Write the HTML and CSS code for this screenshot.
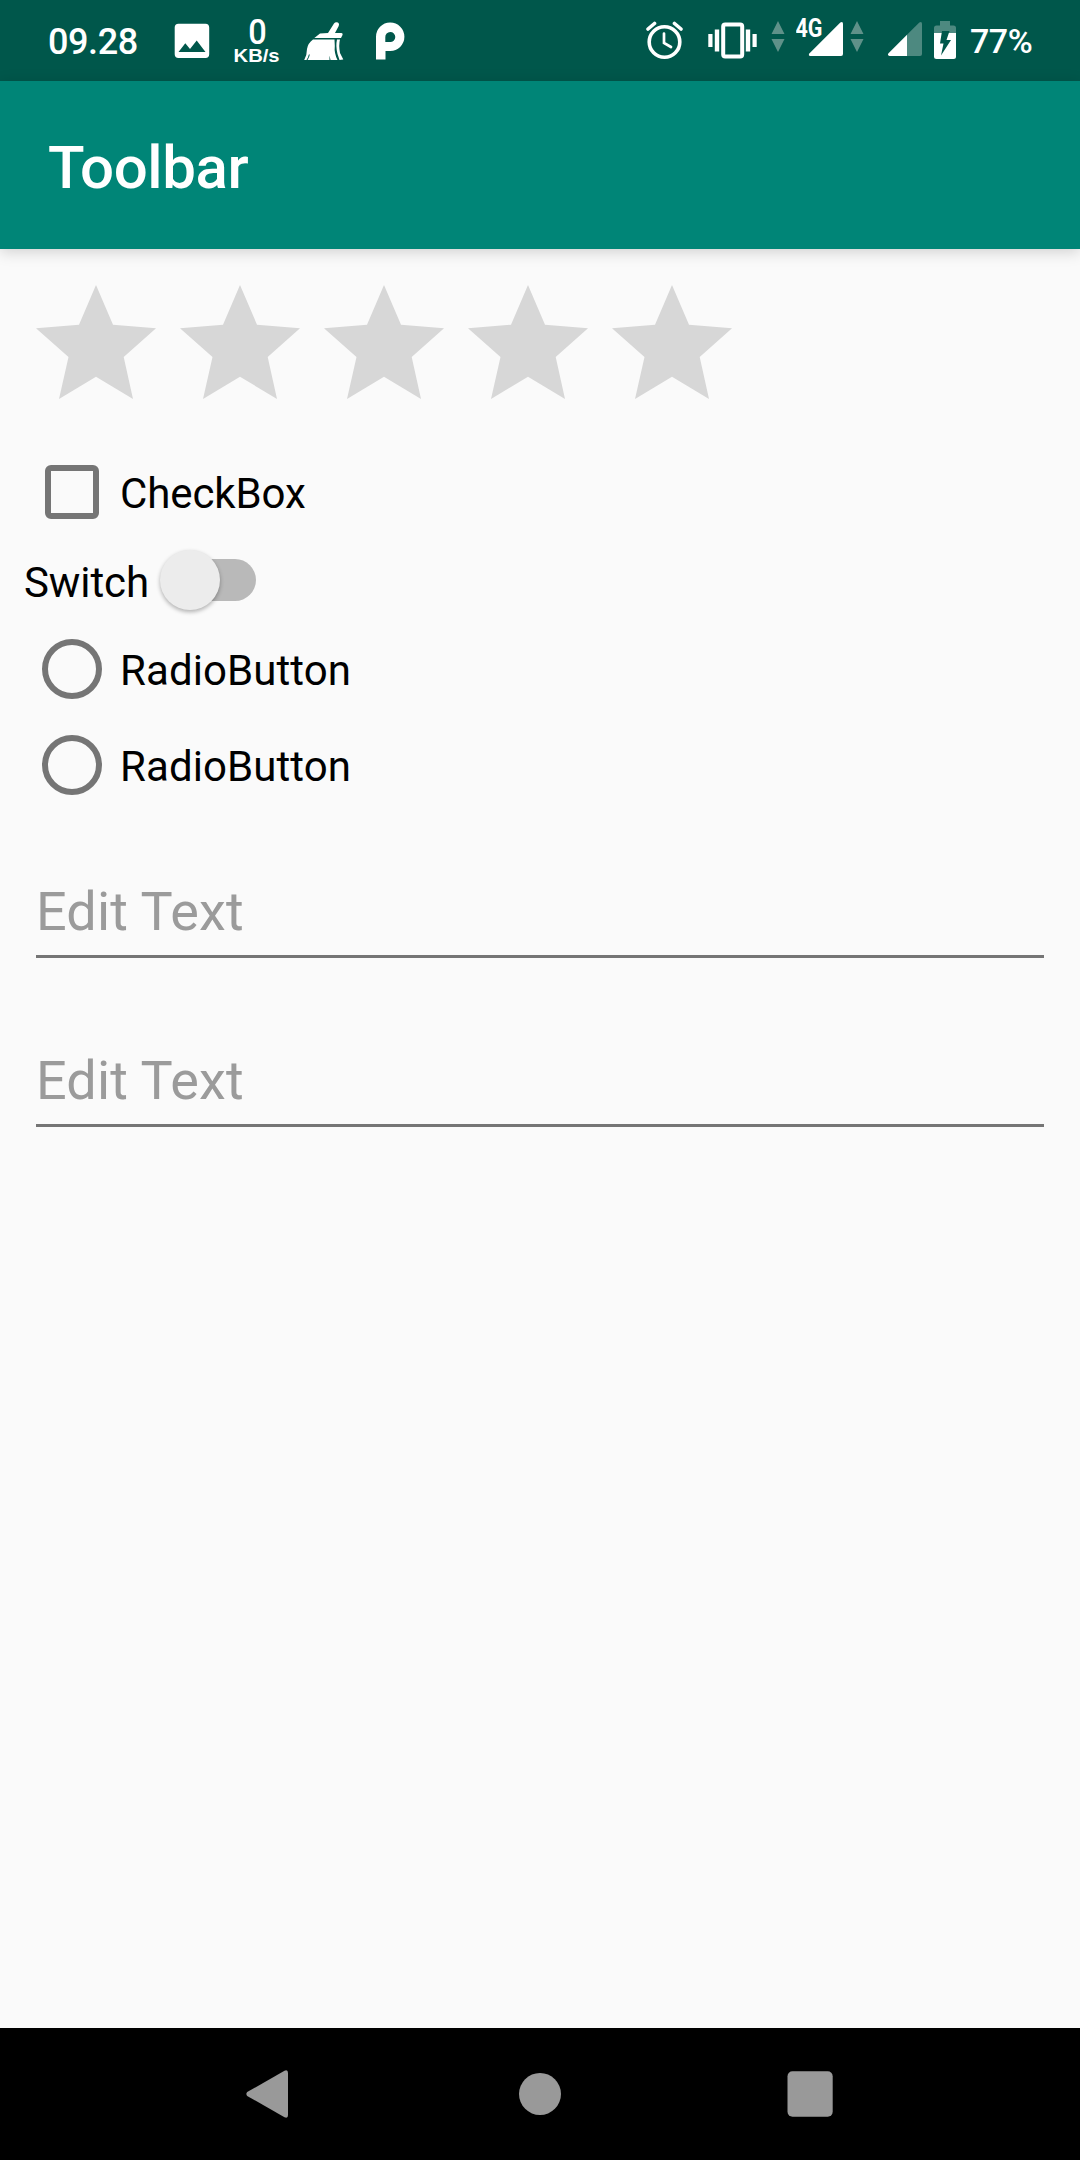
FILE: index.html
```html
<!DOCTYPE html>
<html lang="en">
<head>
<meta charset="utf-8">
<title>Toolbar</title>
<link rel="stylesheet" href="styles.css">
</head>
<body>
<div class="screen">
  <header class="status">
    <div class="status-group">
      <span class="clock">09.28</span>
      <svg class="icon-image" width="36" height="81" viewBox="174 0 36 81"><path fill="#fff" fill-rule="evenodd" d="M178.500 23.700H205.500Q209.200 23.700 209.200 27.500V54.300Q209.200 58 205.500 58H178.500Q174.700 58 174.700 54.300V27.500Q174.700 23.700 178.500 23.700ZM178.500 52H205.500L196.700 40.500L190 49L185.300 43.300Z"/></svg>
      <svg class="speed" width="50" height="81" viewBox="232 0 50 81"><text class="speed-value" x="248.300" y="43.700" textLength="18.500" lengthAdjust="spacingAndGlyphs">0</text><text class="speed-unit" x="233.600" y="62.300" textLength="46" lengthAdjust="spacingAndGlyphs">KB/s</text></svg>
      <svg class="icon-broom" width="40" height="81" viewBox="304 0 40 81"><g fill="#fff"><path d="M328 33L334 23.500Q335.500 21.500 338 22.600Q339.800 24 338.700 26L335 33H341.500Q343.300 33.600 342.500 35L341 38H314.300L320 33.500Z"/><path d="M313 39.500H334.500L334.800 46Q334 53 337.500 60H330.500L329.500 55.500V60H304.200Q307 55 307 49Q308 43 313 39.500Z"/><path d="M337 39.500H340Q338.500 45 340 53L343.300 59.500L339.500 60L337.500 54Q335.500 46 337 39.500Z"/></g><path d="M307 60Q309 57 309.300 54.500" fill="none" stroke="#00574b"/></svg>
      <svg class="icon-p" width="30" height="81" viewBox="375 0 30 81"><path fill="#fff" fill-rule="evenodd" d="M376 59.500V37A14.200 14.200 0 1 1 390 51H385.500V59.500ZM385.300 42H390A5 5 0 1 0 385.300 37.300Z"/></svg>
    </div>
    <div class="status-group">
      <svg width="38" height="81" viewBox="646 0 38 81" fill="none" stroke="#fff" stroke-linecap="round"><circle cx="664.500" cy="42" r="15.300" stroke-width="3.600"/><path d="M664 33.500V43L671 47" stroke-width="2.700"/><path d="M648 29L654.500 23.500M674.500 23.500L681 29" stroke-width="3.600"/></svg>
      <svg class="icon-vibrate" width="50" height="81" viewBox="708 0 50 81"><rect x="723.200" y="24.600" width="19" height="31.800" rx="2" fill="none" stroke="#fff" stroke-width="4"/><path fill="#fff" d="M708.300 34h4.200v13h-4.200zM714.800 29.500h4.400v22h-4.400zM745.800 29.500h4.400v22h-4.400zM752.500 34h4.200v13h-4.200z"/></svg>
      <svg class="icon-data" width="14" height="81" viewBox="0 0 14 81"><path fill="#5f9189" d="M7 21L13.500 34H.5ZM.5 39H13.500L7 52Z"/></svg>
      <svg class="icon-4g" width="48" height="81" viewBox="796 0 48 81"><text class="network" x="795.500" y="37.300" textLength="27" lengthAdjust="spacingAndGlyphs">4G</text><path fill="#fff" d="M809.300 53.500L840.300 22.500Q843 21 843 24V54Q843 56 841 56H810.500Q808 56 809.300 53.500Z"/></svg>
      <svg class="icon-data2" width="14" height="81" viewBox="0 0 14 81"><path fill="#5f9189" d="M7 21L13.500 34H.5ZM.5 39H13.500L7 52Z"/></svg>
      <svg class="icon-signal" width="34" height="81" viewBox="888 0 34 81"><path fill="#4d8980" d="M907 34.700L919.300 22.500Q922 21 922 24V54Q922 56 920 56H907Z"/><path fill="#fff" d="M907 34.700V56H889.500Q887 55.500 888.500 53.200Z"/></svg>
      <svg class="icon-battery" width="22" height="81" viewBox="934 0 22 81"><path fill="#4d8980" d="M934 33V28Q934 25.500 936.500 25.500H940V21H950V25.500H953.500Q956 25.500 956 28V33Z"/><path fill="#fff" d="M934 33H956V56.500Q956 59 953.500 59H936.500Q934 59 934 56.500Z"/><path fill="#00574b" d="M942 31H949.500L946.500 40H951L941 55.500L943.500 43.500H940Z"/></svg>
      <span class="percent">77%</span>
    </div>
  </header>
  <div class="toolbar"><h1>Toolbar</h1></div>
  <main>
    <div class="rating">
      <svg width="120" height="114" viewBox="0 0 120 114"><path d="M60 0L77 39.700L120 43.300L87.700 72L97 114L60 91.700L23 114L32.500 72L0 43.300L43 39.700Z"/></svg>
      <svg width="120" height="114" viewBox="0 0 120 114"><path d="M60 0L77 39.700L120 43.300L87.700 72L97 114L60 91.700L23 114L32.500 72L0 43.300L43 39.700Z"/></svg>
      <svg width="120" height="114" viewBox="0 0 120 114"><path d="M60 0L77 39.700L120 43.300L87.700 72L97 114L60 91.700L23 114L32.500 72L0 43.300L43 39.700Z"/></svg>
      <svg width="120" height="114" viewBox="0 0 120 114"><path d="M60 0L77 39.700L120 43.300L87.700 72L97 114L60 91.700L23 114L32.500 72L0 43.300L43 39.700Z"/></svg>
      <svg width="120" height="114" viewBox="0 0 120 114"><path d="M60 0L77 39.700L120 43.300L87.700 72L97 114L60 91.700L23 114L32.500 72L0 43.300L43 39.700Z"/></svg>
    </div>
    <label class="option"><span class="box"></span><span class="label">CheckBox</span></label>
    <label class="switch-row"><span class="label">Switch</span><span class="track"><span class="thumb"></span></span></label>
    <label class="option"><span class="radio"></span><span class="label label-radio">RadioButton</span></label>
    <label class="option"><span class="radio"></span><span class="label label-radio">RadioButton</span></label>
    <div class="field">Edit Text</div>
    <div class="field">Edit Text</div>
  </main>
  <nav class="navbar">
    <svg width="48" height="48" viewBox="0 0 48 48"><path fill="#999" d="M1.200 22L38.500 .8Q42 -.8 42 3V45Q42 48.800 38.500 47.200L1.200 26Q-.5 24 1.200 22Z"/></svg>
    <svg width="48" height="48" viewBox="0 0 48 48"><circle cx="24" cy="24" r="21" fill="#999"/></svg>
    <svg width="48" height="48" viewBox="0 0 48 48"><rect x="1.500" y="1.300" width="45.200" height="45.400" rx="5" fill="#999"/></svg>
  </nav>
</div>
</body>
</html>
```
FILE: styles.css
```css
body {
  margin: 0;
  font-family: Roboto, sans-serif;
}

.screen {
  display: flex;
  flex-direction: column;
  width: 1080px;
  height: 2160px;
  overflow: hidden;
  background: #fafafa;
}

svg {
  display: block;
  flex: none;
}

.status {
  display: flex;
  justify-content: space-between;
  height: 81px;
  padding: 0 48px;
  background: #00574b;
  color: #fff;
}

.status-group {
  display: flex;
}

.clock {
  width: 126px;
  font-size: 36px;
  font-weight: 500;
  line-height: 85px;
  letter-spacing: -0.4px;
}

.speed {
  margin-left: 22px;
  fill: #fff;
}

.speed-value {
  font: 500 35px Roboto, sans-serif;
}

.speed-unit {
  font: bold 19px "Liberation Sans", sans-serif;
}

.icon-broom {
  margin-left: 22px;
}

.icon-p {
  margin-left: 31px;
}

.icon-vibrate {
  margin-left: 24px;
}

.icon-data {
  margin-left: 13px;
}

.icon-4g {
  margin-left: 11px;
}

.icon-data2 {
  margin-left: 6px;
}

.icon-signal {
  margin-left: 24px;
}

.icon-battery {
  margin-left: 12px;
}

.network {
  fill: #fff;
  font: bold 26px Roboto, sans-serif;
}

.percent {
  width: 62px;
  margin-left: 14px;
  font-size: 34px;
  font-weight: 500;
  line-height: 83px;
  letter-spacing: -0.5px;
  white-space: nowrap;
}

.toolbar {
  flex: none;
  height: 168px;
  padding-left: 48px;
  background: #008577;
  box-shadow: 0 3px 14px rgba(0, 0, 0, 0.17);
}

.toolbar h1 {
  margin: 0;
  color: #fff;
  font-size: 60px;
  font-weight: 500;
  line-height: 173px;
  letter-spacing: -0.4px;
}

main {
  flex: 1;
  padding: 36px 36px 0;
}

.rating {
  display: flex;
  gap: 24px;
  height: 159px;
}

.rating path {
  fill: #d7d7d7;
}

.option {
  display: flex;
  align-items: center;
  height: 96px;
}

.label {
  color: #000;
  font-size: 42px;
  line-height: 48px;
  padding-top: 3px;
  letter-spacing: -0.1px;
}

.label-radio {
  letter-spacing: 0.08px;
}

.box,
.radio {
  box-sizing: border-box;
  flex: none;
  border: 6px solid #757575;
}

.box {
  width: 54px;
  height: 54px;
  margin: 0 21px 0 9px;
  border-radius: 6px;
}

.radio {
  width: 60px;
  height: 60px;
  margin: 0 18px 0 6px;
  border-radius: 50%;
}

.switch-row {
  display: flex;
  align-items: center;
  height: 81px;
  margin-left: -12px;
}

.switch-row .label {
  width: 127px;
  padding-top: 4px;
}

.track {
  width: 84px;
  height: 42px;
  margin: -1px 0 0 21px;
  border-radius: 21px;
  background: #b9b9b9;
}

.thumb {
  display: block;
  width: 60px;
  height: 60px;
  margin: -9px 0 0 -12px;
  border-radius: 50%;
  background: #ececec;
  box-shadow: 0 2px 4px rgba(0, 0, 0, 0.3);
}

.field {
  box-sizing: border-box;
  height: 100px;
  margin-top: 69px;
  padding-top: 22px;
  border-bottom: 3px solid #757575;
  color: #9b9b9b;
  font-size: 54px;
  line-height: 64px;
  letter-spacing: 0.15px;
}

.option + .field {
  margin-top: 45px;
}

.navbar {
  display: flex;
  gap: 222px;
  height: 132px;
  padding-left: 246px;
  align-items: center;
  background: #000;
}
```
